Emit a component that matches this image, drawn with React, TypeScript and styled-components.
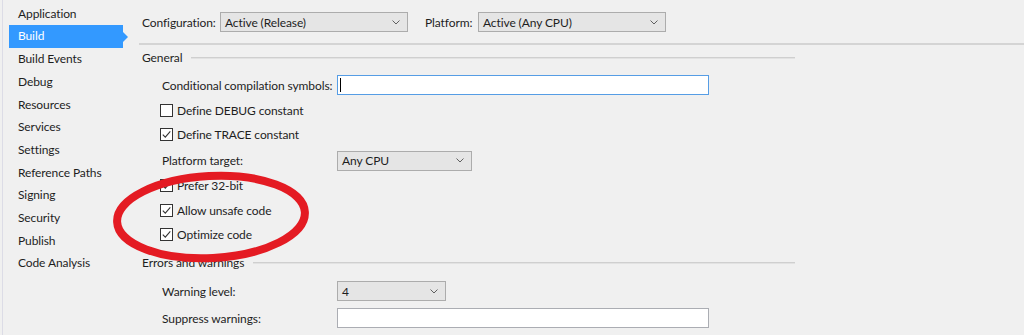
import React from "react";
import styled, { createGlobalStyle } from "styled-components";

const NAV_ITEMS = [
  "Application",
  "Build",
  "Build Events",
  "Debug",
  "Resources",
  "Services",
  "Settings",
  "Reference Paths",
  "Signing",
  "Security",
  "Publish",
  "Code Analysis",
];

const GlobalStyle = createGlobalStyle`
  html, body {
    margin: 0;
    padding: 0;
    background: #f0f0f0;
  }
  body {
    font-family: Lato, "Noto Sans", sans-serif;
    font-size: 12px;
    letter-spacing: -0.1px;
    color: #1e1e1e;
  }
`;

const Chevron = () => (
  <svg width="8" height="5" viewBox="0 0 8 5">
    <path d="M0.5 0.5 L4 4 L7.5 0.5" fill="none" stroke="#606060" strokeWidth="1" />
  </svg>
);

const Check = () => (
  <svg width="11" height="11" viewBox="0 0 11 11">
    <path d="M1.8 5.6 L4.3 8.2 L9.3 2.4" fill="none" stroke="#333" strokeWidth="1.1" />
  </svg>
);

const Checkbox: React.FC<{ checked?: boolean; label: string }> = ({ checked, label }) => (
  <CheckRow>
    <Box>{checked && <Check />}</Box>
    <span>{label}</span>
  </CheckRow>
);

const Dropdown: React.FC<{ value: string; width: number }> = ({ value, width }) => (
  <Select $width={width}>
    <span>{value}</span>
    <Chevron />
  </Select>
);

const App: React.FC = () => {
  return (
    <>
      <GlobalStyle />
      <Page>
        <Nav>
          {NAV_ITEMS.map((item) => (
            <NavItem key={item} $active={item === "Build"}>
              {item}
            </NavItem>
          ))}
        </Nav>

        <Main>
          <Toolbar>
            <ToolLabel $width={78}>Configuration:</ToolLabel>
            <Dropdown value="Active (Release)" width={188} />
            <ToolLabel $width={53} $gap={17}>
              Platform:
            </ToolLabel>
            <Dropdown value="Active (Any CPU)" width={188} />
          </Toolbar>

          <Content>
            <SectionHeader>
              <span>General</span>
              <Rule />
            </SectionHeader>

            <FieldRow $top={4}>
              <FieldLabel>Conditional compilation symbols:</FieldLabel>
              <TextBox $width={372} $focused />
            </FieldRow>
            <FieldRow $top={1}>
              <Checkbox label="Define DEBUG constant" />
            </FieldRow>
            <FieldRow>
              <Checkbox checked label="Define TRACE constant" />
            </FieldRow>
            <FieldRow $top={2} $height={25}>
              <FieldLabel>Platform target:</FieldLabel>
              <Dropdown value="Any CPU" width={135} />
            </FieldRow>
            <FieldRow>
              <Checkbox checked label="Prefer 32-bit" />
            </FieldRow>
            <FieldRow $top={1}>
              <Checkbox checked label="Allow unsafe code" />
            </FieldRow>
            <FieldRow>
              <Checkbox checked label="Optimize code" />
            </FieldRow>

            <SectionHeader $top={4}>
              <span>Errors and warnings</span>
              <Rule />
            </SectionHeader>

            <FieldRow $top={5}>
              <FieldLabel>Warning level:</FieldLabel>
              <Dropdown value="4" width={109} />
            </FieldRow>
            <FieldRow $top={3}>
              <FieldLabel>Suppress warnings:</FieldLabel>
              <TextBox $width={372} />
            </FieldRow>
          </Content>
        </Main>

        <Annotation width="230" height="120" viewBox="0 0 230 120">
          <ellipse
            cx="112"
            cy="58"
            rx="94"
            ry="41"
            fill="none"
            stroke="#e41b23"
            strokeWidth="8"
            transform="rotate(-3 112 58)"
          />
        </Annotation>
      </Page>
    </>
  );
};

const Page = styled.div`
  position: relative;
  display: flex;
  width: 1024px;
  height: 335px;
  overflow: hidden;
  background: #f0f0f0;
`;

const Nav = styled.nav`
  flex: 0 0 126px;
  margin-left: 2px;
  padding: 2.8px 5px 0 6px;
  border-left: 1px solid #dcdce6;
  box-sizing: border-box;
`;

const NavItem = styled.div<{ $active?: boolean }>`
  position: relative;
  height: 22.7px;
  line-height: 22.7px;
  padding-left: 9px;
  white-space: nowrap;
  color: ${(p) => (p.$active ? "#ffffff" : "#1e1e1e")};
  background: ${(p) => (p.$active ? "#3399ff" : "transparent")};

  &::after {
    content: "";
    display: ${(p) => (p.$active ? "block" : "none")};
    position: absolute;
    right: -5px;
    top: 50%;
    margin-top: -5px;
    border-style: solid;
    border-width: 5px 0 5px 5px;
    border-color: transparent transparent transparent #3399ff;
  }
`;

const Main = styled.main`
  flex: 1;
  margin-left: 11px;
  display: flex;
  flex-direction: column;
`;

const Toolbar = styled.div`
  display: flex;
  align-items: center;
  height: 45px;
  padding: 1px 0 0 3px;
  box-sizing: border-box;
  border-bottom: 2px solid #d4d4d4;
`;

const ToolLabel = styled.span<{ $gap?: number; $width: number }>`
  flex: 0 0 ${(p) => p.$width}px;
  margin-left: ${(p) => p.$gap ?? 0}px;
  white-space: nowrap;
`;

const Select = styled.div<{ $width: number }>`
  display: flex;
  align-items: center;
  justify-content: space-between;
  width: ${(p) => p.$width}px;
  height: 20px;
  padding: 0 7px 0 4px;
  box-sizing: border-box;
  background: #e5e5e5;
  border: 1px solid #acacac;
  white-space: nowrap;
`;

const Content = styled.div`
  width: 656px;
  display: flex;
  flex-direction: column;
`;

const SectionHeader = styled.div<{ $top?: number }>`
  display: flex;
  align-items: center;
  gap: 9px;
  height: 24px;
  margin-top: ${(p) => p.$top ?? 0}px;
  padding: 1px 0 0 3px;
  box-sizing: border-box;
  white-space: nowrap;
`;

const Rule = styled.div`
  flex: 1;
  height: 1px;
  background: #cfcfcf;
  border-bottom: 1px solid #e2e2e2;
`;

const FieldRow = styled.div<{ $top?: number; $height?: number }>`
  display: flex;
  align-items: center;
  height: ${(p) => p.$height ?? 24}px;
  margin-top: ${(p) => p.$top ?? 0}px;
  padding-left: 21px;
`;

const FieldLabel = styled.span`
  flex: 0 0 177px;
  padding-left: 2px;
  box-sizing: border-box;
  white-space: nowrap;
`;

const TextBox = styled.div<{ $width: number; $focused?: boolean }>`
  position: relative;
  width: ${(p) => p.$width}px;
  height: 20px;
  box-sizing: border-box;
  background: #ffffff;
  border: 1px solid ${(p) => (p.$focused ? "#569de5" : "#abadb3")};

  &::before {
    content: "";
    display: ${(p) => (p.$focused ? "block" : "none")};
    position: absolute;
    left: 2px;
    top: 2px;
    width: 1px;
    height: 14px;
    background: #000;
  }
`;

const CheckRow = styled.label`
  display: flex;
  align-items: center;
  gap: 4px;
  white-space: nowrap;
`;

const Box = styled.span`
  display: flex;
  align-items: center;
  justify-content: center;
  width: 13px;
  height: 13px;
  box-sizing: border-box;
  border: 1px solid #333333;
  background: #ffffff;
`;

const Annotation = styled.svg`
  position: absolute;
  left: 99px;
  top: 159px;
  pointer-events: none;
`;

export default App;
